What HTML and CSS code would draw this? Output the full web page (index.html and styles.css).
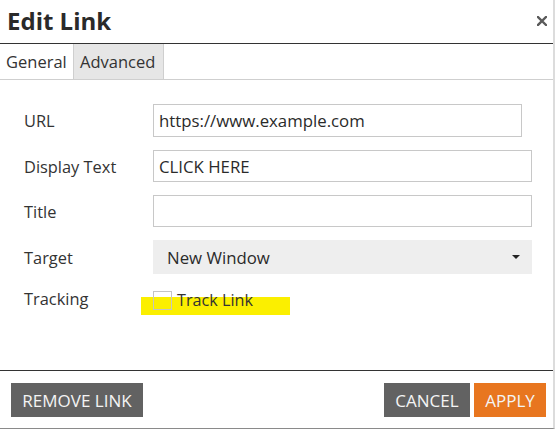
FILE: index.html
```html
<!DOCTYPE html>
<html lang="en">
<head>
<meta charset="utf-8">
<title>Edit Link</title>
<link rel="stylesheet" href="styles.css">
</head>
<body>
<div class="dialog">
  <header class="header">
    <h1 class="title">Edit Link</h1>
    <button class="close" aria-label="Close">
      <svg width="10" height="10" viewBox="0 0 10 10"><path d="M1 1L9 9M9 1L1 9" stroke="#5a5a5a" stroke-width="2.4" stroke-linecap="square"/></svg>
    </button>
  </header>
  <nav class="tabs">
    <div class="tab active">General</div>
    <div class="tab">Advanced</div>
  </nav>
  <section class="panel">
    <div class="form">
      <label class="label">URL</label>
      <input class="field short" type="text" value="https://www.example.com">
      <label class="label">Display Text</label>
      <input class="field" type="text" value="CLICK HERE">
      <label class="label">Title</label>
      <input class="field" type="text" value="">
      <label class="label">Target</label>
      <div class="select">
        <span>New Window</span>
        <svg width="8" height="4" viewBox="0 0 8 4"><path d="M0 0H8L4 4Z" fill="#222"/></svg>
      </div>
      <label class="label">Tracking</label>
      <div class="check">
        <span class="mark"></span>
        <input class="box" type="checkbox">
        <span class="check-text">Track Link</span>
      </div>
    </div>
  </section>
  <footer class="footer">
    <button class="btn btn-remove">REMOVE LINK</button>
    <div class="actions">
      <button class="btn btn-cancel">CANCEL</button>
      <button class="btn btn-apply">APPLY</button>
    </div>
  </footer>
</div>
</body>
</html>
```
FILE: styles.css
```css
* { box-sizing: border-box; }
html, body { margin: 0; background: #fff; }
body {
  font-family: "Open Sans", "Noto Sans", sans-serif;
  color: #333;
  width: 556px;
  height: 429px;
  overflow: hidden;
}
.dialog {
  width: 555px;
  border-right: 2px solid #dcdcdc;
  border-bottom: 1px solid #8a8a8a;
}
.header {
  height: 44px;
  border-bottom: 1px solid #333;
  display: flex;
  align-items: center;
  justify-content: space-between;
  padding: 0 6px 1px 7px;
}
.title {
  margin: 0;
  font-size: 24px;
  font-weight: 700;
  color: #2a2a2a;
  line-height: 1;
}
.close {
  border: 0;
  background: none;
  padding: 0;
  width: 10px;
  height: 10px;
  display: flex;
}
.tabs {
  display: flex;
  height: 36px;
  border-bottom: 1px solid #cfcfcf;
}
.tab {
  font-size: 16.5px;
  line-height: 35px;
  padding: 0 6px;
  color: #333;
}
.tab.active { width: 73px; }
.tab + .tab {
  width: 91px;
  background: #e6e6e6;
  border-left: 1px solid #cfcfcf;
  border-right: 1px solid #cfcfcf;
  padding-left: 6px;
}
.panel {
  height: 290px;
  padding: 24px 0 0 24px;
}
.form {
  display: grid;
  grid-template-columns: 129px 379px;
  row-gap: 13px;
  align-items: center;
}
.label {
  font-size: 16.4px;
  color: #333;
}
.field {
  height: 32px;
  border: 1px solid #c8c8c8;
  padding: 0 5px;
  font-family: inherit;
  font-size: 16.8px;
  color: #2a2a2a;
  width: 379px;
  margin: 0;
  outline: none;
}
.field.short { width: 369px; height: 33px; }
.select {
  height: 34px;
  background: #eeeeee;
  display: flex;
  align-items: center;
  justify-content: space-between;
  padding: 0 12px 0 14px;
  font-size: 16.8px;
  color: #2a2a2a;
}
.check {
  position: relative;
  display: flex;
  align-items: center;
  gap: 5px;
  height: 20px;
  margin-top: 3px;
}
.mark {
  position: absolute;
  left: -12px;
  top: 7px;
  width: 149px;
  height: 18px;
  background: #fbef00;
}
.box {
  position: relative;
  appearance: none;
  -webkit-appearance: none;
  width: 19px;
  height: 19px;
  margin: 0;
  border: 1px solid #c4c4c4;
  background: transparent;
}
.check-text {
  position: relative;
  font-size: 16.2px;
  color: #333;
}
.footer {
  border-top: 1px solid #333;
  display: flex;
  justify-content: space-between;
  padding: 12px 7px 11px 11px;
}
.actions { display: flex; gap: 4px; }
.btn {
  height: 34px;
  border: 0;
  font-family: inherit;
  font-size: 17px;
  color: #f4f4f4;
  padding: 0;
  margin: 0;
  text-align: center;
}
.btn-remove { width: 132px; background: #626262; }
.btn-cancel { width: 86px; background: #626262; }
.btn-apply { width: 72px; background: #e8761f; }
```
